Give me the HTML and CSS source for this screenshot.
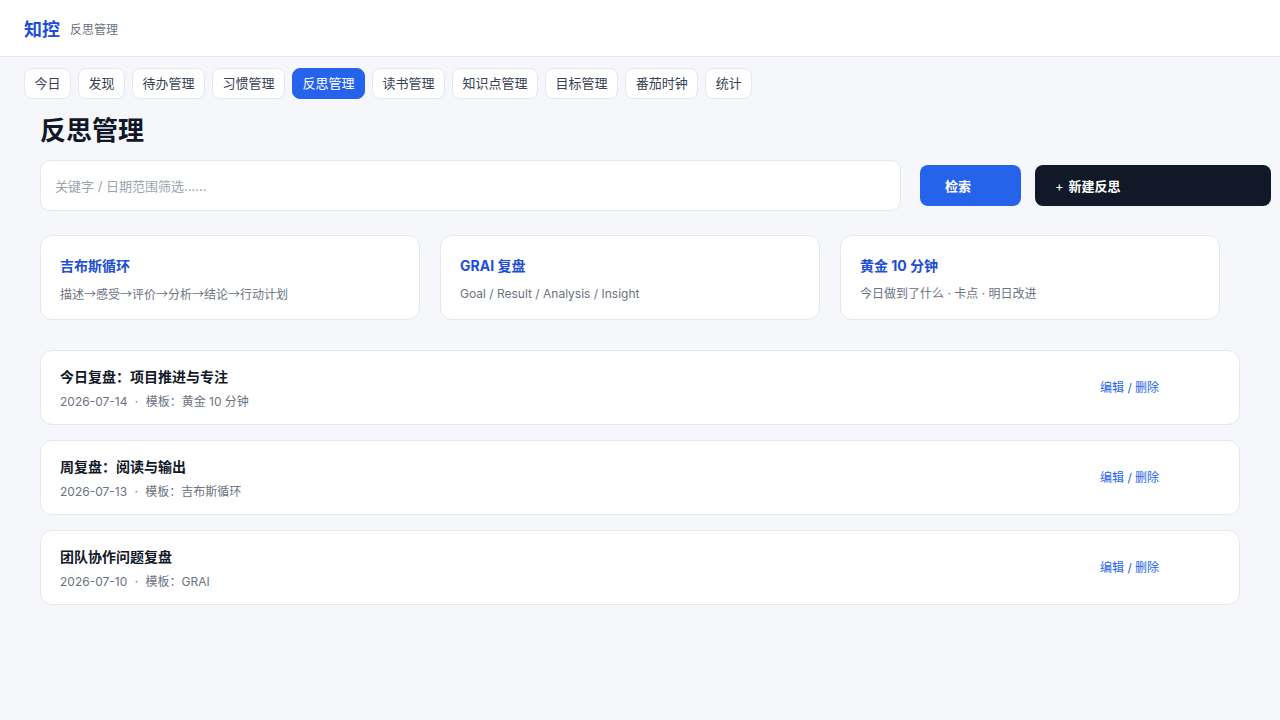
FILE: index.html
```html
<!DOCTYPE html>
<html lang="zh-CN">
<head>
  <meta charset="UTF-8">
  <meta name="viewport" content="width=device-width, initial-scale=1">
  <title>反思管理 - 知控</title>
  <link rel="stylesheet" href="styles.css">
</head>
<body>
  <header class="topbar">
    <span class="logo">知控</span>
    <span class="crumb">反思管理</span>
  </header>

  <nav class="tabs">
    <a class="tab">今日</a>
    <a class="tab">发现</a>
    <a class="tab">待办管理</a>
    <a class="tab">习惯管理</a>
    <a class="tab active">反思管理</a>
    <a class="tab">读书管理</a>
    <a class="tab">知识点管理</a>
    <a class="tab">目标管理</a>
    <a class="tab">番茄时钟</a>
    <a class="tab">统计</a>
  </nav>

  <main class="page">
    <h1>反思管理</h1>

    <div class="toolbar">
      <input class="search" type="text" placeholder="关键字 / 日期范围筛选……">
      <button class="btn btn-primary">检索</button>
      <button class="btn btn-dark"><span class="plus">+</span>新建反思</button>
    </div>

    <section class="templates">
      <div class="tpl">
        <div class="tpl-title">吉布斯循环</div>
        <div class="tpl-desc cjk">描述→感受→评价→分析→结论→行动计划</div>
      </div>
      <div class="tpl">
        <div class="tpl-title">GRAI 复盘</div>
        <div class="tpl-desc">Goal / Result / Analysis / Insight</div>
      </div>
      <div class="tpl">
        <div class="tpl-title">黄金 10 分钟</div>
        <div class="tpl-desc">今日做到了什么 · 卡点 · 明日改进</div>
      </div>
    </section>

    <section class="list">
      <div class="item">
        <div>
          <div class="item-title">今日复盘：项目推进与专注</div>
          <div class="item-meta">2026-07-14 <span class="dot">·</span> 模板：黄金 10 分钟</div>
        </div>
        <a class="actions">编辑 / 删除</a>
      </div>
      <div class="item">
        <div>
          <div class="item-title">周复盘：阅读与输出</div>
          <div class="item-meta">2026-07-13 <span class="dot">·</span> 模板：吉布斯循环</div>
        </div>
        <a class="actions">编辑 / 删除</a>
      </div>
      <div class="item">
        <div>
          <div class="item-title">团队协作问题复盘</div>
          <div class="item-meta">2026-07-10 <span class="dot">·</span> 模板：GRAI</div>
        </div>
        <a class="actions">编辑 / 删除</a>
      </div>
    </section>
  </main>
</body>
</html>
```

FILE: styles.css
```css
* {
  box-sizing: border-box;
}

body {
  margin: 0;
  background: #f6f7fb;
  color: #111827;
  font-family: Inter, "Noto Sans CJK SC", sans-serif;
}

.topbar {
  height: 57px;
  background: #fff;
  border-bottom: 1px solid #e5e7eb;
  display: flex;
  align-items: center;
  gap: 10px;
  padding: 0 24px;
}

.logo {
  font-size: 18px;
  font-weight: 700;
  color: #1d4ed8;
}

.crumb {
  font-size: 12px;
  color: #6b7280;
}

.tabs {
  display: flex;
  gap: 7px;
  padding: 11px 24px 0;
}

.tab {
  height: 31px;
  line-height: 29px;
  padding: 0 9.5px;
  background: #fff;
  border: 1px solid #e5e7eb;
  border-radius: 8px;
  font-size: 13px;
  color: #374151;
}

.tab.active {
  background: #2563eb;
  border-color: #2563eb;
  color: #fff;
}

.page {
  padding: 0 40px;
}

h1 {
  margin: 14px 0 11px;
  font-size: 26px;
  line-height: 36px;
  font-weight: 700;
  color: #111827;
}

.toolbar {
  display: flex;
  align-items: center;
}

.search {
  width: 861px;
  height: 51px;
  padding: 0 14px;
  border: 1px solid #e5e7eb;
  border-radius: 10px;
  background: #fff;
  font-family: inherit;
  font-size: 13px;
  color: #111827;
}

.search::placeholder {
  color: #9ca3af;
}

.btn {
  height: 41px;
  border: 0;
  border-radius: 8px;
  padding: 0 20px;
  text-align: left;
  font-family: inherit;
  font-size: 13px;
  font-weight: 700;
  color: #fff;
}

.btn-primary {
  width: 101px;
  margin-left: 19px;
  padding-left: 25px;
  background: #2563eb;
}

.btn-dark {
  width: 236px;
  margin-left: 14px;
  margin-right: -31px;
  background: #111827;
}

.plus {
  font-weight: 400;
  margin-right: 5px;
}

.templates {
  display: grid;
  grid-template-columns: repeat(3, 380px);
  gap: 20px;
  margin-top: 24px;
}

.tpl {
  height: 85px;
  background: #fff;
  border: 1px solid #e5e7eb;
  border-radius: 12px;
  padding: 19px 19px 0;
}

.tpl-title {
  font-size: 14px;
  line-height: 22px;
  font-weight: 700;
  color: #1d4ed8;
}

.tpl-desc {
  margin-top: 8px;
  font-size: 12px;
  line-height: 18px;
  color: #6b7280;
}

.cjk {
  font-family: "Noto Sans CJK SC", sans-serif;
}

.list {
  display: flex;
  flex-direction: column;
  gap: 15px;
  margin-top: 30px;
  width: 1200px;
}

.item {
  height: 75px;
  display: grid;
  grid-template-columns: 1fr 120px;
  align-items: center;
  background: #fff;
  border: 1px solid #e5e7eb;
  border-radius: 12px;
  padding: 2px 19px 0;
}

.item-title {
  font-size: 14px;
  line-height: 22px;
  font-weight: 700;
  color: #111827;
}

.item-meta {
  margin-top: 5px;
  font-size: 12px;
  line-height: 18px;
  color: #6b7280;
}

.dot {
  margin: 0 4px;
}

.actions {
  margin-bottom: 4px;
  font-size: 12px;
  color: #2563eb;
}
```
